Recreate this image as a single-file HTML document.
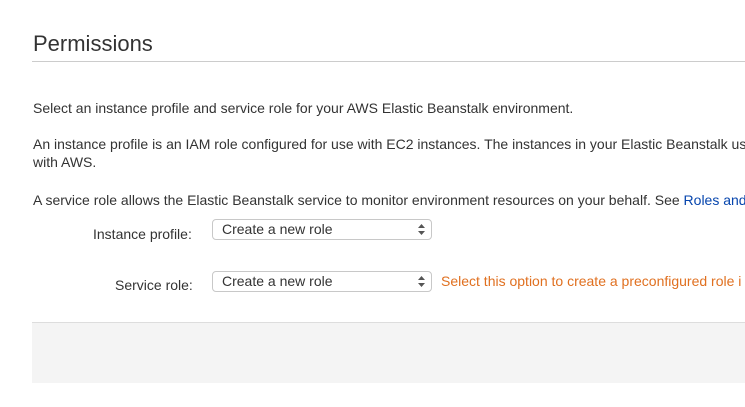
<!DOCTYPE html>
<html><head><style>
body{margin:0;width:745px;height:407px;overflow:hidden;background:#fff;font-family:"Liberation Sans",sans-serif;color:#333;position:relative}
.a{position:absolute;white-space:nowrap;font-size:14px}
h1{position:absolute;left:33px;top:31px;margin:0;font-size:22px;font-weight:normal;color:#333}
.hr{position:absolute;left:32px;right:0;top:61px;height:1px;background:#ccc}
.sel{position:absolute;left:212px;width:218px;height:19px;border:1px solid #c8c8c8;border-radius:4px;background:#fff;font-size:14px;line-height:18px;box-sizing:content-box}
.sel span{position:absolute;left:9px;top:0;color:#333}
.sel svg{position:absolute;right:6px;top:4px}
.ft{position:absolute;left:32px;right:0;top:322px;height:60px;background:#f4f4f4;border-top:1px solid #ddd}
</style></head><body>
<h1>Permissions</h1>
<div class="hr"></div>
<div class="a" style="left:33px;top:100px">Select an instance profile and service role for your AWS Elastic Beanstalk environment.</div>
<div class="a" style="left:33px;top:136px">An instance profile is an IAM role configured for use with EC2 instances. The instances in your Elastic Beanstalk use</div>
<div class="a" style="left:33px;top:154px">with AWS.</div>
<div class="a" style="left:33px;top:192px">A service role allows the Elastic Beanstalk service to monitor environment resources on your behalf. See <span style="color:#0645ad">Roles and</span></div>
<div class="a" style="left:93px;top:226px">Instance profile:</div>
<div class="sel" style="top:219px"><span>Create a new role</span><svg width="7" height="11"><path d="M3.5 0L7 4H0z M3.5 11L7 7H0z" fill="#555"/></svg></div>
<div class="a" style="left:115px;top:277px">Service role:</div>
<div class="sel" style="top:271px"><span>Create a new role</span><svg width="7" height="11"><path d="M3.5 0L7 4H0z M3.5 11L7 7H0z" fill="#555"/></svg></div>
<div class="a" style="left:441px;top:273px;color:#e07020">Select this option to create a preconfigured role i</div>
<div class="ft"></div>
</body></html>
